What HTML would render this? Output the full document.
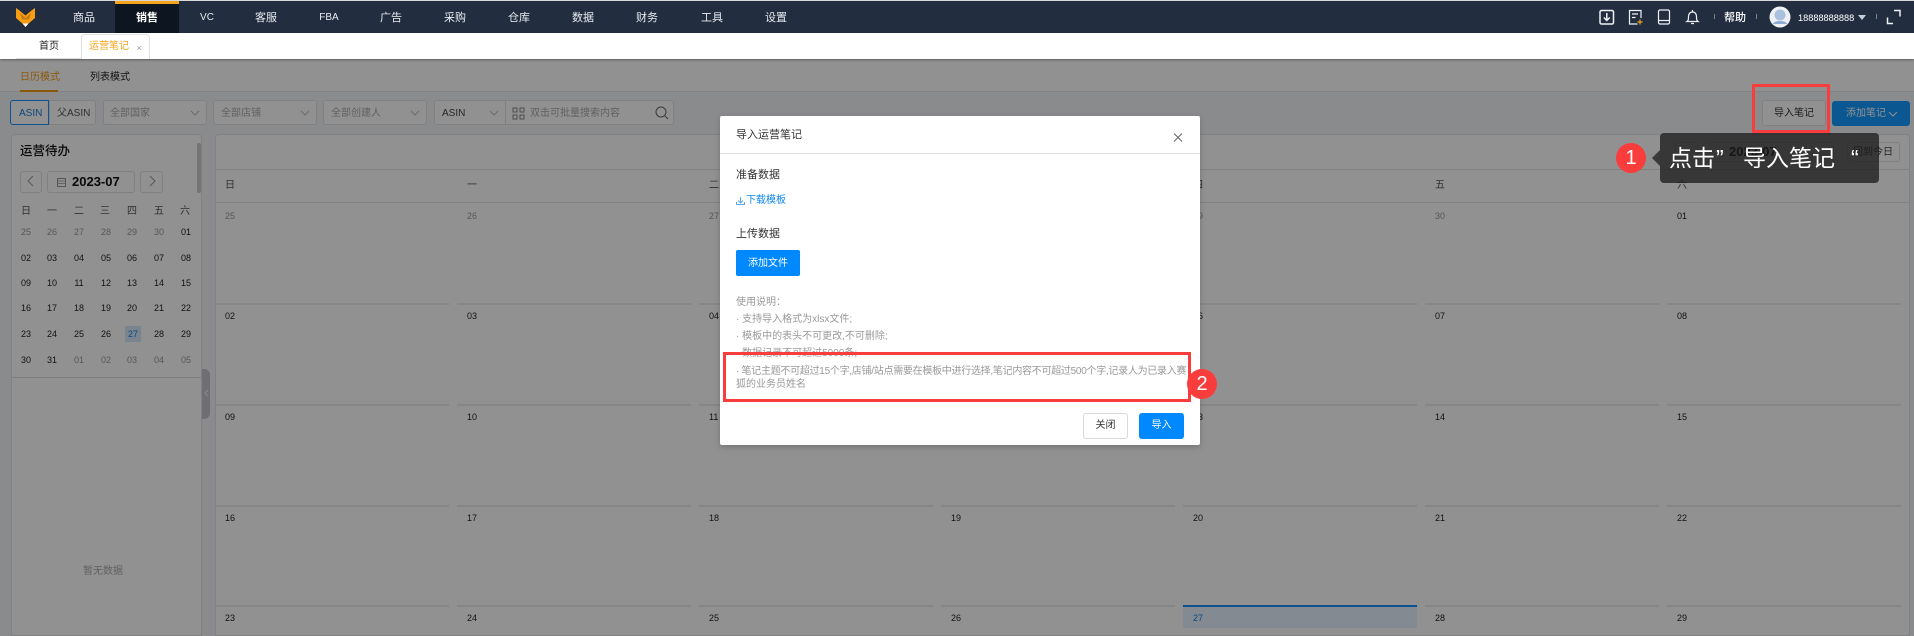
<!DOCTYPE html>
<html lang="zh-CN"><head><meta charset="utf-8"><title>运营笔记</title>
<style>
*{box-sizing:border-box}
html,body{margin:0;padding:0}
body{width:1914px;height:636px;position:relative;overflow:hidden;background:#f3f5f8;font-family:"Liberation Sans","Noto Sans CJK SC",sans-serif;color:#222}
.a,.t{position:absolute}
.t{white-space:nowrap;line-height:16px;height:16px;font-size:10px}
.c{transform:translateX(-50%)}
.n{color:#fff;font-size:11px;top:10px;color:#e8ebef}
.d{font-size:9px;color:#222}
.g{color:#666}
.box{position:absolute;background:#fff;border:1px solid #e2e2e2;border-radius:2px}
.line{position:absolute;height:2px;width:234px;background:#ececec}
.m{color:#999;font-size:10px;left:736px}
.s{font-size:11px;color:#333}
svg{position:absolute;overflow:visible}
</style></head><body>

<!-- page under the overlay -->
<div class="a" style="left:0;top:59px;width:1914px;height:33px;background:#fff;border-bottom:1px solid #e4e4e4"></div>
<div class="t" style="left:20px;top:70px;color:#f39c12">日历模式</div>
<div class="a" style="left:20px;top:90px;width:38px;height:2px;background:#f39c12"></div>
<div class="t" style="left:90px;top:70px;color:#222">列表模式</div>

<div class="a" style="left:0;top:92px;width:1914px;height:544px;background:#f3f5f8"></div>

<div class="box" style="left:49px;top:100px;width:47px;height:25px;border-radius:0 3px 3px 0"></div>
<div class="box" style="left:10px;top:100px;width:39px;height:25px;border-color:#1890ff;border-radius:3px 0 0 3px"></div>
<div class="t" style="left:19px;top:106px;color:#1680e0;font-size:10px">ASIN</div>
<div class="t" style="left:57px;top:106px;color:#555;font-size:10px">父ASIN</div>
<div class="box" style="left:103px;top:100px;width:104px;height:25px;border-radius:3px"></div>
<div class="t" style="left:110px;top:106px;color:#aaa">全部国家</div>
<div class="box" style="left:213px;top:100px;width:104px;height:25px;border-radius:3px"></div>
<div class="t" style="left:221px;top:106px;color:#aaa">全部店铺</div>
<div class="box" style="left:323px;top:100px;width:104px;height:25px;border-radius:3px"></div>
<div class="t" style="left:331px;top:106px;color:#aaa">全部创建人</div>
<div class="box" style="left:434px;top:100px;width:240px;height:25px;border-radius:3px"></div>
<div class="a" style="left:505px;top:101px;width:1px;height:23px;background:#e2e2e2"></div>
<div class="t" style="left:442px;top:106px;color:#444">ASIN</div>
<div class="t" style="left:530px;top:106px;color:#aaa">双击可批量搜索内容</div>
<svg style="left:0;top:0" width="1" height="1" fill="none" stroke="#bbb" stroke-width="1">
<path d="M191 111l4 4 4-4M301 111l4 4 4-4M411 111l4 4 4-4M490 111l4 4 4-4"/>
<path d="M513 108h4v4h-4zM520 108h4v4h-4zM513 115h4v4h-4zM520 115h4v4h-4z" stroke="#888"/>
<circle cx="661" cy="112" r="5" stroke="#666"/><path d="M665 116l3 3" stroke="#666"/>
</svg>

<div class="box" style="left:1762px;top:100px;width:64px;height:26px;border-radius:3px"></div>
<div class="t c" style="left:1794px;top:106px;color:#333">导入笔记</div>
<div class="a" style="left:1832px;top:101px;width:78px;height:25px;background:#129aff;border-radius:3px"></div>
<div class="t" style="left:1846px;top:106px;color:#fff">添加笔记</div>
<svg style="left:0;top:0" width="1" height="1" fill="none" stroke="#fff"><path d="M1889 112l4 4 4-4"/></svg>

<!-- sidebar -->
<div class="box" style="left:11px;top:134px;width:191px;height:502px;border-radius:4px 4px 0 0;border-color:#e3e3e3"></div>
<div class="t" style="left:20px;top:143px;font-size:12.5px;font-weight:500;color:#111">运营待办</div>
<div class="box" style="left:20px;top:171px;width:22px;height:22px;border-radius:3px"></div>
<div class="box" style="left:47px;top:171px;width:88px;height:22px;border-radius:3px"></div>
<div class="box" style="left:140px;top:171px;width:23px;height:22px;border-radius:3px"></div>
<svg style="left:0;top:0" width="1" height="1" fill="none" stroke="#999"><path d="M33 176l-5 5 5 5M150 176l5 5-5 5"/><rect x="57.5" y="178.5" width="8" height="8" /><path d="M58 181h7M58 183.500h7" stroke-width=".7"/></svg>
<div class="t" style="left:72px;top:174px;font-size:13px;font-weight:700;color:#111">2023-07</div>
<div class="a" style="left:197px;top:143px;width:4px;height:50px;background:#ccc;border-radius:2px"></div>

<div class="t c" style="left:26px;top:204px;color:#555">日</div><div class="t c" style="left:52px;top:204px;color:#555">一</div><div class="t c" style="left:79px;top:204px;color:#555">二</div><div class="t c" style="left:105px;top:204px;color:#555">三</div><div class="t c" style="left:132px;top:204px;color:#555">四</div><div class="t c" style="left:159px;top:204px;color:#555">五</div><div class="t c" style="left:185px;top:204px;color:#555">六</div>

<div class="t c d g" style="left:26px;top:224px;color:#999">25</div><div class="t c d" style="left:52px;top:224px;color:#999">26</div><div class="t c d" style="left:79px;top:224px;color:#999">27</div><div class="t c d" style="left:106px;top:224px;color:#999">28</div><div class="t c d" style="left:132px;top:224px;color:#999">29</div><div class="t c d" style="left:159px;top:224px;color:#999">30</div><div class="t c d" style="left:186px;top:224px">01</div>
<div class="t c d" style="left:26px;top:250px">02</div><div class="t c d" style="left:52px;top:250px">03</div><div class="t c d" style="left:79px;top:250px">04</div><div class="t c d" style="left:106px;top:250px">05</div><div class="t c d" style="left:132px;top:250px">06</div><div class="t c d" style="left:159px;top:250px">07</div><div class="t c d" style="left:186px;top:250px">08</div>
<div class="t c d" style="left:26px;top:275px">09</div><div class="t c d" style="left:52px;top:275px">10</div><div class="t c d" style="left:79px;top:275px">11</div><div class="t c d" style="left:106px;top:275px">12</div><div class="t c d" style="left:132px;top:275px">13</div><div class="t c d" style="left:159px;top:275px">14</div><div class="t c d" style="left:186px;top:275px">15</div>
<div class="t c d" style="left:26px;top:300px">16</div><div class="t c d" style="left:52px;top:300px">17</div><div class="t c d" style="left:79px;top:300px">18</div><div class="t c d" style="left:106px;top:300px">19</div><div class="t c d" style="left:132px;top:300px">20</div><div class="t c d" style="left:159px;top:300px">21</div><div class="t c d" style="left:186px;top:300px">22</div>
<div class="a" style="left:125px;top:326px;width:16px;height:16px;background:#d6e8fa"></div>
<div class="t c d" style="left:26px;top:326px">23</div><div class="t c d" style="left:52px;top:326px">24</div><div class="t c d" style="left:79px;top:326px">25</div><div class="t c d" style="left:106px;top:326px">26</div><div class="t c d" style="left:133px;top:326px;color:#1680e0">27</div><div class="t c d" style="left:159px;top:326px">28</div><div class="t c d" style="left:186px;top:326px">29</div>
<div class="t c d" style="left:26px;top:352px">30</div><div class="t c d" style="left:52px;top:352px">31</div><div class="t c d" style="left:79px;top:352px;color:#999">01</div><div class="t c d" style="left:106px;top:352px;color:#999">02</div><div class="t c d" style="left:132px;top:352px;color:#999">03</div><div class="t c d" style="left:159px;top:352px;color:#999">04</div><div class="t c d" style="left:186px;top:352px;color:#999">05</div>
<div class="a" style="left:12px;top:377px;width:189px;height:1px;background:#ddd"></div>
<div class="t c" style="left:103px;top:564px;color:#aaa">暂无数据</div>
<div class="a" style="left:202px;top:369px;width:8px;height:50px;background:#c2c4c8;border-radius:0 6px 6px 0"></div>
<svg style="left:0;top:0" width="1" height="1" fill="none" stroke="#f3f3f3"><path d="M208 390l-3 3 3 3"/></svg>

<!-- main calendar -->
<div class="box" style="left:215px;top:134px;width:1695px;height:502px;border-radius:4px 4px 0 0;border-color:#e3e3e3"></div>
<div class="a" style="left:216px;top:169px;width:1693px;height:1px;background:#e3e3e3"></div>
<div class="a" style="left:216px;top:202px;width:1693px;height:1px;background:#e3e3e3"></div>
<div class="box" style="left:1675px;top:142px;width:23px;height:20px;border-radius:3px"></div>
<div class="box" style="left:1703px;top:142px;width:104px;height:20px;border-radius:3px"></div>
<div class="box" style="left:1811px;top:142px;width:23px;height:20px;border-radius:3px"></div>
<div class="box" style="left:1847px;top:142px;width:53px;height:20px;border-radius:3px"></div>
<div class="t" style="left:1729px;top:144px;font-size:13px;font-weight:700;color:#111">2023-07</div>
<div class="t c" style="left:1873px;top:145px;color:#444">回到今日</div>

<div class="t" style="left:225px;top:178px;color:#555">日</div><div class="t" style="left:467px;top:178px;color:#555">一</div><div class="t" style="left:709px;top:178px;color:#555">二</div><div class="t" style="left:951px;top:178px;color:#555">三</div><div class="t" style="left:1193px;top:178px;color:#555">四</div><div class="t" style="left:1435px;top:178px;color:#555">五</div><div class="t" style="left:1677px;top:178px;color:#555">六</div>

<div class="line" style="left:215px;top:303px"></div><div class="line" style="left:457px;top:303px"></div><div class="line" style="left:699px;top:303px"></div><div class="line" style="left:941px;top:303px"></div><div class="line" style="left:1183px;top:303px"></div><div class="line" style="left:1425px;top:303px"></div><div class="line" style="left:1667px;top:303px"></div>
<div class="line" style="left:215px;top:404px"></div><div class="line" style="left:457px;top:404px"></div><div class="line" style="left:699px;top:404px"></div><div class="line" style="left:941px;top:404px"></div><div class="line" style="left:1183px;top:404px"></div><div class="line" style="left:1425px;top:404px"></div><div class="line" style="left:1667px;top:404px"></div>
<div class="line" style="left:215px;top:505px"></div><div class="line" style="left:457px;top:505px"></div><div class="line" style="left:699px;top:505px"></div><div class="line" style="left:941px;top:505px"></div><div class="line" style="left:1183px;top:505px"></div><div class="line" style="left:1425px;top:505px"></div><div class="line" style="left:1667px;top:505px"></div>
<div class="line" style="left:215px;top:605px"></div><div class="line" style="left:457px;top:605px"></div><div class="line" style="left:699px;top:605px"></div><div class="line" style="left:941px;top:605px"></div><div class="a" style="left:1183px;top:605px;width:234px;height:23px;background:#e6f2ff;border-top:2px solid #1890ff"></div><div class="line" style="left:1425px;top:605px"></div><div class="line" style="left:1667px;top:605px"></div>

<div class="t d" style="left:225px;top:208px;color:#999">25</div><div class="t d" style="left:467px;top:208px;color:#999">26</div><div class="t d" style="left:709px;top:208px;color:#999">27</div><div class="t d" style="left:951px;top:208px;color:#999">28</div><div class="t d" style="left:1193px;top:208px;color:#999">29</div><div class="t d" style="left:1435px;top:208px;color:#999">30</div><div class="t d" style="left:1677px;top:208px">01</div>
<div class="t d" style="left:225px;top:308px">02</div><div class="t d" style="left:467px;top:308px">03</div><div class="t d" style="left:709px;top:308px">04</div><div class="t d" style="left:951px;top:308px">05</div><div class="t d" style="left:1193px;top:308px">06</div><div class="t d" style="left:1435px;top:308px">07</div><div class="t d" style="left:1677px;top:308px">08</div>
<div class="t d" style="left:225px;top:409px">09</div><div class="t d" style="left:467px;top:409px">10</div><div class="t d" style="left:709px;top:409px">11</div><div class="t d" style="left:951px;top:409px">12</div><div class="t d" style="left:1193px;top:409px">13</div><div class="t d" style="left:1435px;top:409px">14</div><div class="t d" style="left:1677px;top:409px">15</div>
<div class="t d" style="left:225px;top:510px">16</div><div class="t d" style="left:467px;top:510px">17</div><div class="t d" style="left:709px;top:510px">18</div><div class="t d" style="left:951px;top:510px">19</div><div class="t d" style="left:1193px;top:510px">20</div><div class="t d" style="left:1435px;top:510px">21</div><div class="t d" style="left:1677px;top:510px">22</div>
<div class="t d" style="left:225px;top:610px">23</div><div class="t d" style="left:467px;top:610px">24</div><div class="t d" style="left:709px;top:610px">25</div><div class="t d" style="left:951px;top:610px">26</div><div class="t d" style="left:1193px;top:610px;color:#1680e0">27</div><div class="t d" style="left:1435px;top:610px">28</div><div class="t d" style="left:1677px;top:610px">29</div>

<!-- overlay -->
<div class="a" style="left:0;top:59px;width:1914px;height:577px;background:rgba(0,0,0,.43)"></div>

<!-- top nav -->
<div class="a" style="left:0;top:0;width:1914px;height:33px;background:#222e40;border-top:1px solid #d8d8d8"></div>
<div class="a" style="left:115px;top:1px;width:64px;height:32px;background:#0d1520;border-top:3px solid #f5a51c"></div>
<svg style="left:0;top:0" width="1" height="1">
<path d="M16 8l3.500 2.500 6 5 6-5 3.500-2.500v10l-7 6-2.500 3-2.500-3-7-6z" fill="#f79d16"/>
<path d="M22.500 23.500h6l-3 3.500z" fill="#fff"/>
<path d="M20 13l5.500 5 5.500-5-2 6.500h-7z" fill="#c77c10"/>
</svg>
<div class="t c n" style="left:84px">商品</div>
<div class="t c n" style="left:147px;color:#fff;font-weight:700">销售</div>
<div class="t c n" style="left:207px;font-size:10px">VC</div>
<div class="t c n" style="left:266px">客服</div>
<div class="t c n" style="left:329px;font-size:10px">FBA</div>
<div class="t c n" style="left:391px">广告</div>
<div class="t c n" style="left:455px">采购</div>
<div class="t c n" style="left:519px">仓库</div>
<div class="t c n" style="left:583px">数据</div>
<div class="t c n" style="left:647px">财务</div>
<div class="t c n" style="left:712px">工具</div>
<div class="t c n" style="left:776px">设置</div>

<svg style="left:0;top:0" width="1" height="1" fill="none" stroke="#eef1f5" stroke-width="1.200">
<rect x="1600" y="10.500" width="13.500" height="13.500" rx="1.500" stroke-width="1.500"/>
<path d="M1606.800 13v7M1603.800 17.500l3 3 3-3" stroke-width="1.500"/>
<path d="M1641 18v-7.500h-11.500v13.500h8M1632 14h6M1632 17.500h3.500"/>
<path d="M1637.500 22h5M1640 19.500v5" stroke="#f5a51c"/>
<rect x="1658.500" y="10" width="11" height="14" rx="1.500"/>
<path d="M1659 20.500h10"/>
<path d="M1687 21.500c1.500-1 1.500-2.500 1.500-5 0-2.500 1.500-4.500 4-4.500s4 2 4 4.500c0 2.500 0 4 1.500 5zM1692.500 10v2M1691 23.500h3"/>
<path d="M1714.500 14v5M1756.500 14v5M1876.500 14v5" stroke="#7a8492" stroke-width="1"/>
<path d="M1894 10.500h6v6M1893 23.500h-5.500v-6" stroke-width="1.500"/>
<path d="M1858 15h8l-4 5z" fill="#c8ced6" stroke="none"/>
<circle cx="1780" cy="17" r="10.500" fill="#eef0f3" stroke="none"/>
<circle cx="1780" cy="15" r="5.500" fill="#a9c0de" stroke="none"/>
<path d="M1773 24c1-4 13-4 14 0z" fill="#8fadd4" stroke="none"/>
</svg>
<div class="t" style="left:1724px;top:10px;font-size:11px;font-weight:500;color:#fff">帮助</div>
<div class="t" style="left:1798px;top:10px;font-size:9.200px;color:#fff">18888888888</div>

<!-- tabs row -->
<div class="a" style="left:0;top:33px;width:1914px;height:26px;background:#fff;box-shadow:0 1px 2px rgba(0,0,0,.35);"></div>
<div class="a" style="left:16px;top:58px;width:65px;height:1px;background:#ddd"></div>
<div class="t c" style="left:49px;top:39px;color:#222">首页</div>
<div class="a" style="left:81px;top:34px;width:69px;height:25px;background:#fff;border:1px solid #e2e2e2;border-bottom:0;border-radius:4px 4px 0 0"></div>
<div class="t" style="left:89px;top:39px;color:#f5a51c">运营笔记</div>
<div class="t" style="left:136.500px;top:40px;color:#999;font-size:9px">×</div>

<!-- modal -->
<div class="a" style="left:720px;top:116px;width:480px;height:329px;background:#fff;border-radius:2px;box-shadow:0 2px 6px rgba(0,0,0,.2)"></div>
<div class="a" style="left:720px;top:153px;width:480px;height:1px;background:#ddd"></div>
<div class="t s" style="left:736px;top:127px">导入运营笔记</div>
<svg style="left:0;top:0" width="1" height="1" fill="none" stroke="#666"><path d="M1174 133.500l8 8M1182 133.500l-8 8"/>
<path d="M740.500 197v6M738 200.500l2.500 2.500 2.500-2.500M736.500 202v2.500h8v-2.500" stroke="#5aa9ee"/></svg>
<div class="t s" style="left:736px;top:167px">准备数据</div>
<div class="t" style="left:746px;top:193px;color:#0a88f5">下载模板</div>
<div class="t s" style="left:736px;top:226px">上传数据</div>
<div class="a" style="left:736px;top:250px;width:64px;height:26px;background:#0088ff;border-radius:2px"></div>
<div class="t c" style="left:768px;top:256px;color:#fff">添加文件</div>
<div class="t m" style="top:295px">使用说明：</div>
<div class="t m" style="top:312px">· 支持导入格式为xlsx文件;</div>
<div class="t m" style="top:329px">· 模板中的表头不可更改,不可删除;</div>
<div class="t m" style="top:346px">· 数据记录不可超过5000条;</div>
<div class="t m" style="top:364px;letter-spacing:-.28px">· 笔记主题不可超过15个字,店铺/站点需要在模板中进行选择,笔记内容不可超过500个字,记录人为已录入赛</div>
<div class="t m" style="top:377px">狐的业务员姓名</div>
<div class="box" style="left:1083px;top:413px;width:45px;height:26px;border-radius:3px;border-color:#d9d9d9"></div>
<div class="t c" style="left:1105.500px;top:418px;color:#333">关闭</div>
<div class="a" style="left:1139px;top:413px;width:45px;height:26px;background:#0088ff;border-radius:3px"></div>
<div class="t c" style="left:1161.500px;top:418px;color:#fff">导入</div>

<!-- annotations -->
<div class="a" style="left:1752px;top:84px;width:78px;height:49px;border:3px solid #f93c3c"></div>
<div class="a" style="left:1660px;top:133px;width:219px;height:50px;background:rgba(26,26,26,.75);border-radius:4px"></div>
<svg style="left:0;top:0" width="1" height="1"><path d="M1660 150v16l-8-8z" fill="#3a3a3a"/></svg>
<div class="t" style="left:1669px;top:146px;height:24px;line-height:24px;font-size:23px;color:#fff">点击</div>
<div class="t" style="left:1716px;top:146px;height:24px;line-height:24px;font-size:23px;color:#fff">”</div>
<div class="t" style="left:1743px;top:146px;height:24px;line-height:24px;font-size:23px;color:#fff">导入笔记</div>
<div class="t" style="left:1851px;top:146px;height:24px;line-height:24px;font-size:23px;color:#fff">“</div>
<div class="a" style="left:1616px;top:143px;width:30px;height:30px;border-radius:50%;background:#f93c3c"></div>
<div class="t c" style="left:1631px;top:147px;height:22px;line-height:22px;font-size:20px;color:#fff">1</div>
<div class="a" style="left:723px;top:352px;width:468px;height:50px;border:3px solid #f93c3c"></div>
<div class="a" style="left:1187px;top:369px;width:30px;height:30px;border-radius:50%;background:#f93c3c"></div>
<div class="t c" style="left:1202px;top:373px;height:22px;line-height:22px;font-size:20px;color:#fff">2</div>
</body></html>
